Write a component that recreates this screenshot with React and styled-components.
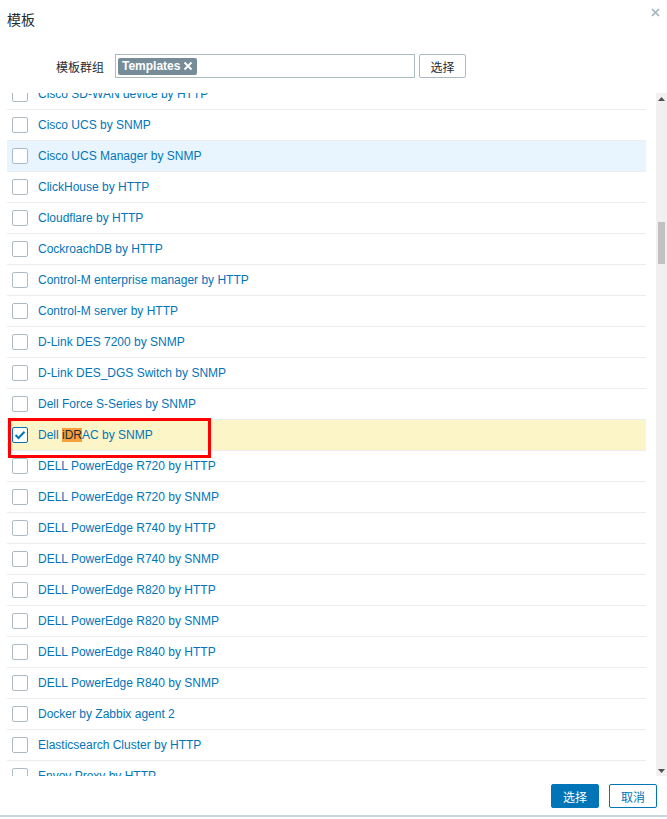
import React, { useLayoutEffect, useRef } from "react";
import styled, { createGlobalStyle } from "styled-components";

const Global = createGlobalStyle`
  html, body { margin: 0; padding: 0; background: #fff; }
  body { font-family: "Liberation Sans", Arial, "Noto Sans CJK SC", sans-serif; font-size: 12px; color: #1f2c33; }
  * { box-sizing: border-box; }
`;

const Page = styled.div`
  position: relative;
  width: 667px;
  height: 819px;
  display: flex;
  flex-direction: column;
  overflow: hidden;
`;

const Header = styled.div`
  height: 38px;
  display: flex;
  align-items: flex-start;
  justify-content: space-between;
  padding: 12px 7px 0 7px;
`;

const Title = styled.h4`
  margin: 0;
  font-size: 14px;
  font-weight: normal;
  line-height: 16px;
  color: #1f2c33;
`;

const Close = styled.button`
  border: 0;
  background: none;
  padding: 0;
  width: 9px;
  height: 9px;
  margin-top: -4px;
  display: flex;
  cursor: pointer;
`;

const FormRow = styled.div`
  margin-top: 16px;
  display: flex;
  align-items: center;
  height: 24px;
`;

const Label = styled.label`
  width: 104px;
  text-align: right;
  color: #1f2c33;
  font-size: 12px;
`;

const Multiselect = styled.div`
  margin-left: 11px;
  width: 300px;
  height: 24px;
  border: 1px solid #acbbc2;
  display: flex;
  align-items: center;
  padding-left: 2px;
`;

const Tag = styled.span`
  display: inline-flex;
  align-items: center;
  gap: 3px;
  height: 17px;
  padding: 0 4px;
  background: #768d99;
  color: #fff;
  border-radius: 2px;
  font-weight: bold;
  font-size: 12px;
`;

const Button = styled.button`
  height: 24px;
  padding: 0 10px;
  font-family: inherit;
  font-size: 12px;
  border-radius: 2px;
  border: 1px solid ${(p) => (p.$variant === "grey" ? "#acbbc2" : "#0275b8")};
  background: ${(p) => (p.$variant === "primary" ? "#0275b8" : "#fff")};
  color: ${(p) =>
    p.$variant === "primary" ? "#fff" : p.$variant === "grey" ? "#1f2c33" : "#0275b8"};
  cursor: pointer;
  min-width: ${(p) => p.$minWidth || "auto"};
`;

const SelectBtn = styled(Button)`
  margin-left: 4px;
  width: 47px;
`;

const Body = styled.div`
  margin-top: 15px;
  height: 683px;
  display: flex;
  padding-left: 7px;
`;

const ListViewport = styled.div`
  flex: 1;
  margin-right: 10px;
  overflow: hidden;
`;

const Row = styled.div`
  height: 31px;
  display: flex;
  align-items: center;
  padding-left: 5px;
  border-bottom: 1px solid #ebeef0;
  background: ${(p) => (p.$selected ? "#fcf5c7" : p.$hover ? "#e8f5ff" : "transparent")};
`;

const Check = styled.span`
  width: 16px;
  height: 16px;
  border: 1px solid ${(p) => (p.$checked ? "#0275b8" : "#acbbc2")};
  border-radius: 2px;
  background: #fff;
  display: flex;
  align-items: center;
  justify-content: center;
  flex: none;
`;

const Name = styled.a`
  margin-left: 10px;
  color: #0275b8;
  font-size: 12px;
  text-decoration: none;
  white-space: nowrap;
`;

const Mark = styled.span`
  background: #f7a03c;
  color: #1f2c33;
`;

const Scrollbar = styled.div`
  width: 11px;
  background: #f0f0f0;
  display: flex;
  flex-direction: column;
  align-items: center;
`;

const Arrow = styled.div`
  height: 11px;
  width: 11px;
  display: flex;
  align-items: center;
  justify-content: center;
`;

const Track = styled.div`
  flex: 1;
  width: 100%;
  display: flex;
  flex-direction: column;
  align-items: center;
`;

const Thumb = styled.div`
  width: 7px;
  height: 42px;
  background: #c1c1c1;
`;

const Footer = styled.div`
  height: 41px;
  display: flex;
  justify-content: flex-end;
  align-items: flex-start;
  gap: 10px;
  padding: 8px 10px 0 0;
  border-bottom: 2px solid #ccd5d9;
`;

const Annotation = styled.div`
  position: absolute;
  left: 8px;
  top: 418px;
  width: 203px;
  height: 40px;
  border: 3px solid #ff0000;
  pointer-events: none;
`;

const items = [
  "Cisco SD-WAN device by HTTP",
  "Cisco UCS by SNMP",
  "Cisco UCS Manager by SNMP",
  "ClickHouse by HTTP",
  "Cloudflare by HTTP",
  "CockroachDB by HTTP",
  "Control-M enterprise manager by HTTP",
  "Control-M server by HTTP",
  "D-Link DES 7200 by SNMP",
  "D-Link DES_DGS Switch by SNMP",
  "Dell Force S-Series by SNMP",
  "Dell iDRAC by SNMP",
  "DELL PowerEdge R720 by HTTP",
  "DELL PowerEdge R720 by SNMP",
  "DELL PowerEdge R740 by HTTP",
  "DELL PowerEdge R740 by SNMP",
  "DELL PowerEdge R820 by HTTP",
  "DELL PowerEdge R820 by SNMP",
  "DELL PowerEdge R840 by HTTP",
  "DELL PowerEdge R840 by SNMP",
  "Docker by Zabbix agent 2",
  "Elasticsearch Cluster by HTTP",
  "Envoy Proxy by HTTP",
  "Etcd by HTTP",
  "Exim by Zabbix agent",
];

function ItemText({ text }) {
  if (text === "Dell iDRAC by SNMP") {
    return (
      <>
        Dell <Mark>iDR</Mark>AC by SNMP
      </>
    );
  }
  return text;
}

export default function App() {
  const ref = useRef(null);
  useLayoutEffect(() => {
    if (ref.current) ref.current.scrollTop = 14;
  }, []);
  const thumbTop = 118;
  return (
    <Page>
      <Global />
      <Header>
        <Title>模板</Title>
        <Close aria-label="close">
          <svg width="9" height="9" viewBox="0 0 9 9">
            <path d="M1 1L8 8M8 1L1 8" stroke="#a3b1b8" strokeWidth="1.6" />
          </svg>
        </Close>
      </Header>
      <FormRow>
        <Label>模板群组</Label>
        <Multiselect>
          <Tag>
            Templates
            <svg width="10" height="10" viewBox="0 0 10 10">
              <path d="M1.5 1.5L8.5 8.5M8.5 1.5L1.5 8.5" stroke="#fff" strokeWidth="1.8" />
            </svg>
          </Tag>
        </Multiselect>
        <SelectBtn $variant="grey">选择</SelectBtn>
      </FormRow>
      <Body>
        <ListViewport ref={ref}>
          {items.map((t) => {
            const checked = t === "Dell iDRAC by SNMP";
            return (
              <Row key={t} $selected={checked} $hover={t === "Cisco UCS Manager by SNMP"}>
                <Check $checked={checked}>
                  {checked && (
                    <svg width="12" height="10" viewBox="0 0 12 10">
                      <path d="M1.5 5L4.5 8L10.5 1.8" fill="none" stroke="#0275b8" strokeWidth="2" />
                    </svg>
                  )}
                </Check>
                <Name href="#">
                  <ItemText text={t} />
                </Name>
              </Row>
            );
          })}
        </ListViewport>
        <Scrollbar>
          <Arrow>
            <svg width="7" height="4" viewBox="0 0 7 4">
              <path d="M0 4L3.5 0L7 4Z" fill="#505050" />
            </svg>
          </Arrow>
          <Track>
            <Thumb style={{ marginTop: thumbTop }} />
          </Track>
          <Arrow>
            <svg width="7" height="4" viewBox="0 0 7 4">
              <path d="M0 0L3.5 4L7 0Z" fill="#505050" />
            </svg>
          </Arrow>
        </Scrollbar>
      </Body>
      <Footer>
        <Button $variant="primary" $minWidth="48px">选择</Button>
        <Button $variant="secondary" $minWidth="48px">取消</Button>
      </Footer>
      <Annotation />
    </Page>
  );
}
